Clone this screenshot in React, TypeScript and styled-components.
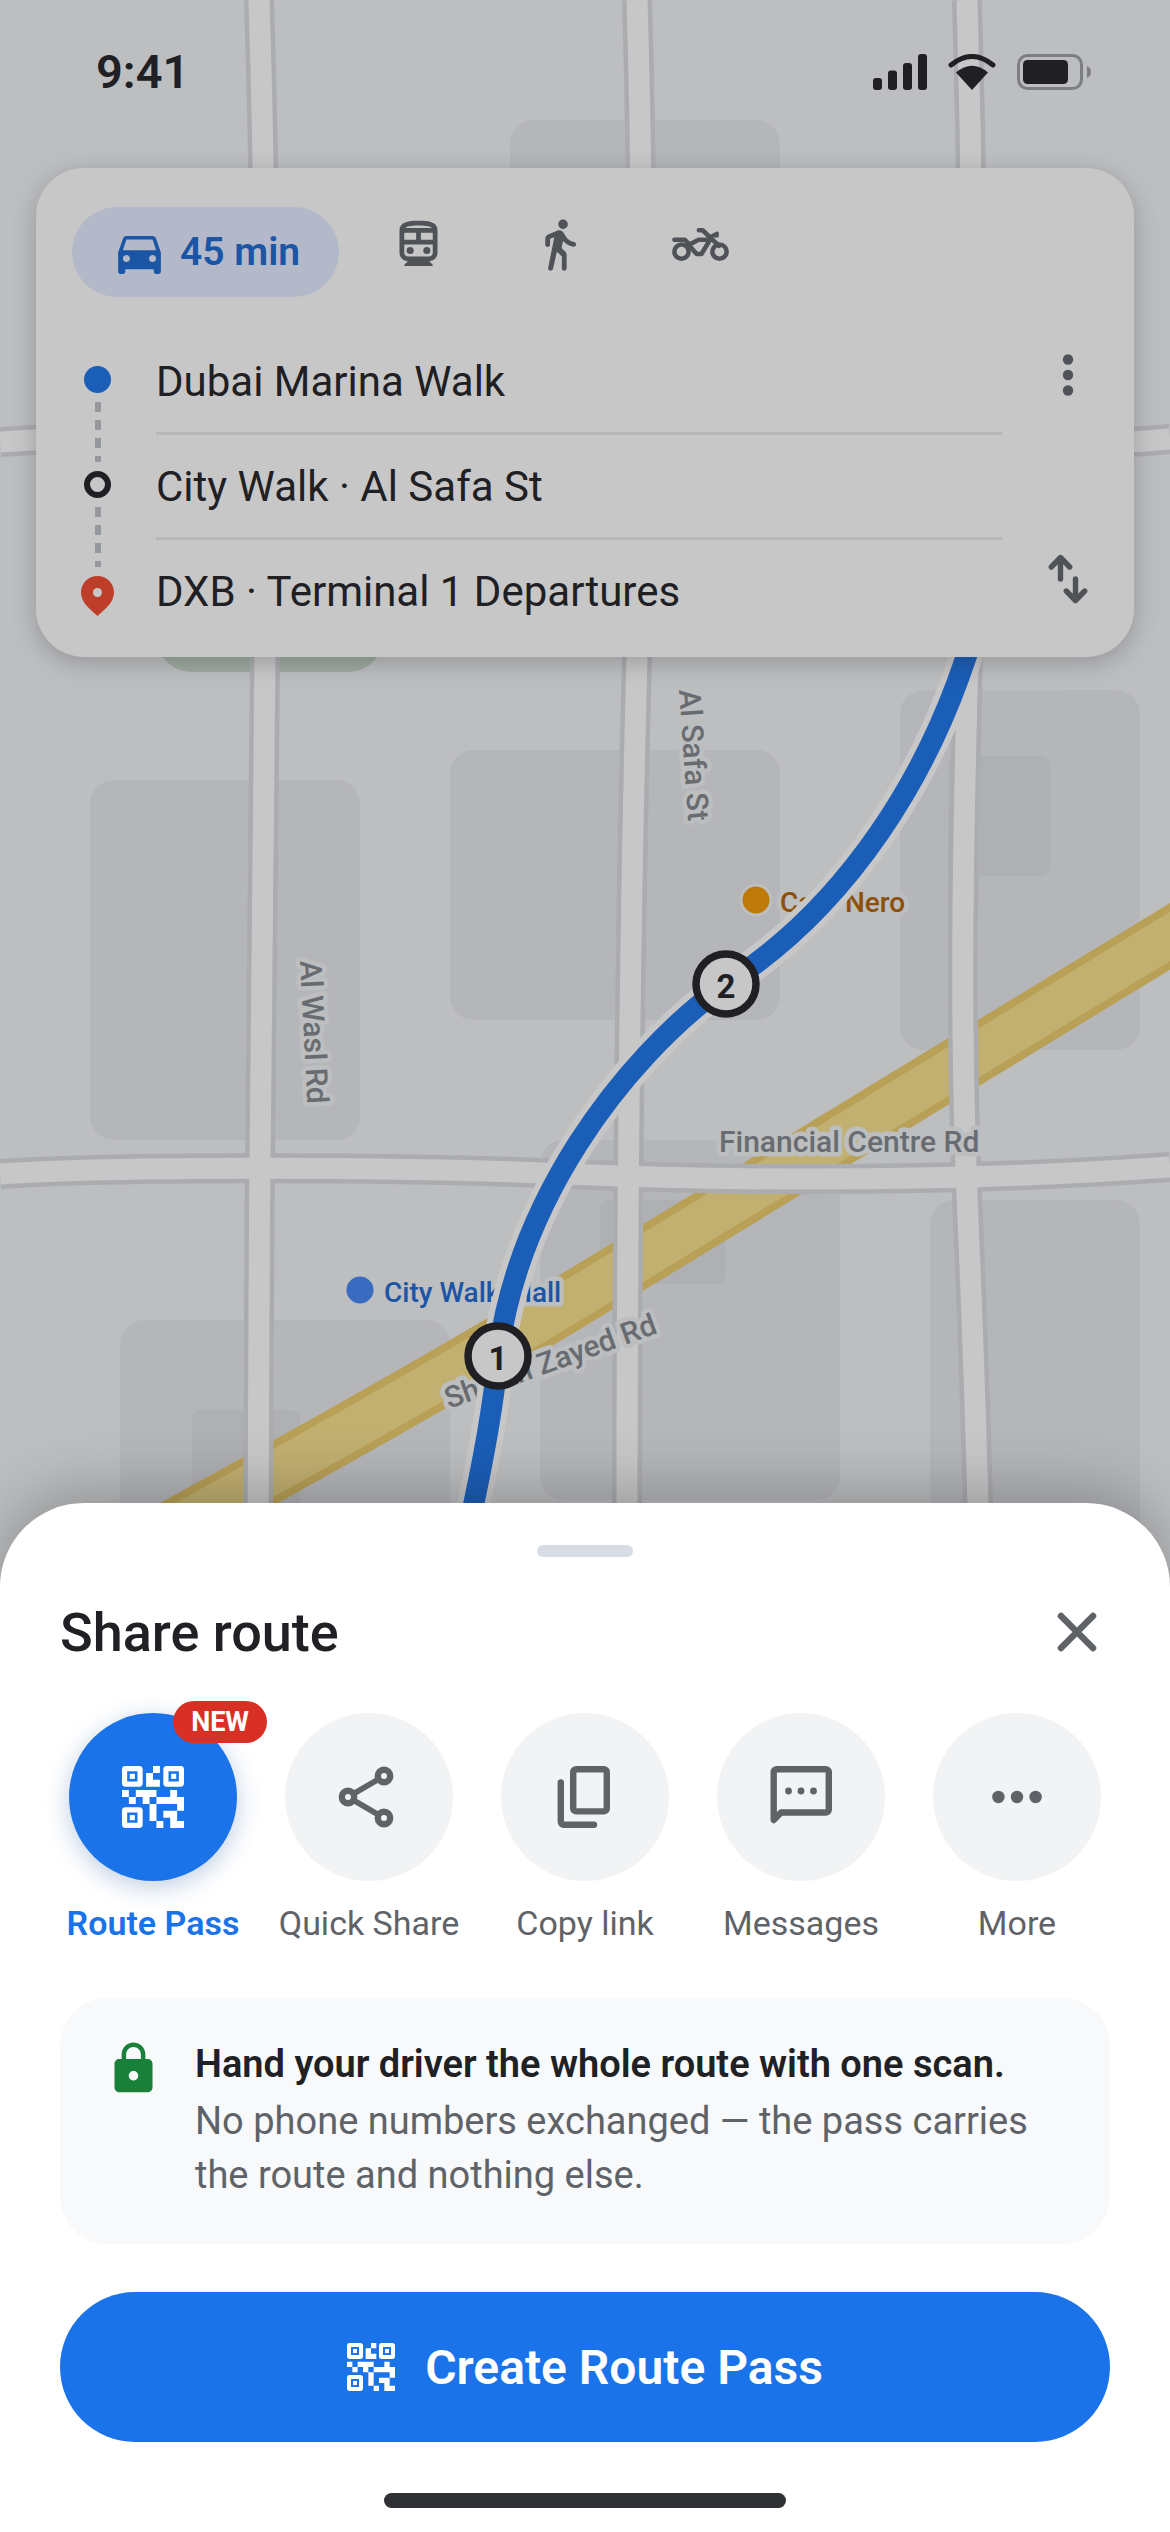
import { ReactNode } from "react";
import styled, { createGlobalStyle } from "styled-components";
import { MdDirectionsCar, MdLock, MdOutlineDirectionsTransit } from "react-icons/md";

const GlobalStyle = createGlobalStyle`
    * {
        box-sizing: border-box;
    }
    body {
        margin: 0;
        font-family: Roboto, "Noto Sans", sans-serif;
        color: #202124;
    }
    button {
        border: 0;
        padding: 0;
        background: none;
        font-family: inherit;
        color: inherit;
        cursor: pointer;
    }
    svg {
        display: block;
        flex-shrink: 0;
    }
`;

const Screen = styled.div`
    position: relative;
    display: flex;
    flex-direction: column;
    justify-content: space-between;
    min-height: 100vh;
    overflow: hidden;
    background: #f1f3f4;
`;

const MapLayer = styled.svg`
    position: absolute;
    inset: 0;
    width: 100%;
    height: 100%;
`;

const Scrim = styled.div`
    position: absolute;
    inset: 0;
    background: rgba(32, 33, 36, 0.25);
`;

const TopArea = styled.header`
    position: relative;
    padding: 0 36px;
`;

const StatusBar = styled.div`
    display: flex;
    align-items: center;
    justify-content: space-between;
    height: 144px;
    margin-bottom: 24px;
    padding: 0 42px 0 60px;
`;

const Clock = styled.span`
    font-size: 47px;
    font-weight: 600;
    line-height: 54px;
`;

const StatusIcons = styled.div`
    display: flex;
    align-items: center;
    gap: 21px;
`;

const RouteCard = styled.section`
    padding: 39px 36px 15px;
    border-radius: 48px;
    background: #fff;
    box-shadow: 0 6px 24px rgba(32, 33, 36, 0.25);
`;

const Modes = styled.div`
    display: flex;
    align-items: flex-start;
    gap: 18px;
    height: 90px;
    margin-bottom: 33px;
`;

const ModeButton = styled.button<{ $active?: boolean }>`
    display: flex;
    align-items: center;
    gap: 12px;
    height: ${(props) => (props.$active ? "90px" : "74px")};
    padding: 0 ${(props) => (props.$active ? "39px" : "33px")};
    border-radius: 45px;
    background: ${(props) => (props.$active ? "#e4edff" : "none")};
    color: ${(props) => (props.$active ? "#1967d2" : "#5f6368")};
    font-size: 39px;
    font-weight: 600;
`;

const RouteBody = styled.div`
    display: flex;
    padding-left: 12px;
`;

const Rail = styled.div`
    display: flex;
    flex-direction: column;
    align-items: center;
    gap: 9px;
    width: 27px;
    padding-top: 36px;
`;

const StopDot = styled.span<{ $via?: boolean }>`
    flex-shrink: 0;
    width: 27px;
    height: 27px;
    border-radius: 50%;
    background: ${(props) => (props.$via ? "#fff" : "#1a73e8")};
    border: ${(props) => (props.$via ? "6px solid #202124" : "0")};
`;

const Dashes = styled.span`
    width: 6px;
    height: 60px;
    background: repeating-linear-gradient(#bdc1c6 0 10px, transparent 10px 18px);
`;

const Stops = styled.ol`
    flex: 1;
    margin: 0 36px 0 45px;
    padding: 0;
    list-style: none;
`;

const Stop = styled.li`
    height: 105px;
    font-size: 42px;
    line-height: 104px;
    border-bottom: 3px solid #e8eaed;
    &:last-child {
        height: 102px;
        border-bottom: 0;
    }
`;

const CardActions = styled.div`
    display: flex;
    flex-direction: column;
    justify-content: space-between;
    padding: 15px 0 33px;
    color: #5f6368;
`;

const Sheet = styled.main`
    position: relative;
    display: flex;
    flex-direction: column;
    padding: 42px 60px 24px;
    border-radius: 84px 84px 0 0;
    background: #fff;
    box-shadow: 0 -12px 60px rgba(0, 0, 0, 0.24);
`;

const Handle = styled.div`
    align-self: center;
    width: 96px;
    height: 12px;
    border-radius: 6px;
    background: #d8dde5;
`;

const SheetHeader = styled.div`
    display: flex;
    align-items: center;
    justify-content: space-between;
    height: 72px;
    margin: 39px 0 45px;
`;

const SheetTitle = styled.h1`
    margin: 0;
    font-size: 54px;
    font-weight: 500;
`;

const CloseButton = styled.button`
    color: #5f6368;
`;

const Targets = styled.div`
    display: grid;
    grid-template-columns: repeat(5, 1fr);
    gap: 30px;
    margin-bottom: 54px;
`;

const Target = styled.button<{ $active?: boolean }>`
    display: flex;
    flex-direction: column;
    align-items: center;
    gap: 21px;
    color: ${(props) => (props.$active ? "#1a73e8" : "#5f6368")};
    font-size: 34px;
    font-weight: ${(props) => (props.$active ? 600 : 400)};
    line-height: 42px;
    white-space: nowrap;
`;

const TargetCircle = styled.span<{ $active?: boolean }>`
    position: relative;
    display: flex;
    align-items: center;
    justify-content: center;
    width: 168px;
    height: 168px;
    border-radius: 50%;
    color: ${(props) => (props.$active ? "#fff" : "#5f6368")};
    background: ${(props) => (props.$active ? "#1a73e8" : "#f1f3f4")};
    box-shadow: ${(props) => (props.$active ? "0 6px 24px rgba(26, 80, 160, 0.28)" : "none")};
`;

const Badge = styled.span`
    position: absolute;
    top: -12px;
    right: -30px;
    padding: 0 18px;
    border-radius: 21px;
    background: #d93025;
    color: #fff;
    font-size: 27px;
    font-weight: 700;
    line-height: 42px;
`;

const InfoBox = styled.section`
    display: flex;
    align-items: flex-start;
    gap: 33px;
    margin-bottom: 48px;
    padding: 42px 45px;
    border-radius: 48px;
    background: #f8f9fa;
    font-size: 38px;
    line-height: 54px;
`;

const InfoTitle = styled.h2`
    margin: 0 0 6px;
    font-size: 38px;
    font-weight: 600;
    line-height: 48px;
`;

const InfoText = styled.p`
    margin: 0;
    color: #5f6368;
`;

const PrimaryButton = styled.button`
    display: flex;
    align-items: center;
    justify-content: center;
    gap: 30px;
    height: 150px;
    margin-bottom: 51px;
    border-radius: 75px;
    background: #1a73e8;
    color: #fff;
    font-size: 48px;
    font-weight: 600;
`;

const HomeIndicator = styled.div`
    align-self: center;
    width: 402px;
    height: 15px;
    border-radius: 8px;
    background: #303134;
`;

const RoadLabel = styled.text`
    font-size: 30px;
    font-weight: 500;
    fill: #80868b;
    stroke: #f1f3f4;
    stroke-width: 9px;
    stroke-linejoin: round;
    paint-order: stroke;
`;

const PlaceLabel = styled(RoadLabel)<{ $color: string }>`
    font-size: 28px;
    fill: ${(props) => props.$color};
`;

const PinNumber = styled.text`
    font-size: 33px;
    font-weight: 700;
    fill: #202124;
    text-anchor: middle;
`;

const blocks = [
    { x: 510, y: 120, w: 270, h: 300 },
    { x: 90, y: 780, w: 270, h: 360 },
    { x: 450, y: 750, w: 330, h: 270 },
    { x: 900, y: 690, w: 240, h: 360 },
    { x: 120, y: 1320, w: 330, h: 300 },
    { x: 540, y: 1140, w: 300, h: 360 },
    { x: 930, y: 1200, w: 210, h: 360 },
];

const buildings = [
    { x: 948, y: 756, w: 102, h: 120 },
    { x: 192, y: 1410, w: 108, h: 120 },
    { x: 600, y: 1200, w: 126, h: 84 },
];

const roads = [
    "M0 442C300 420 800 470 1170 439",
    "M0 1174C120 1166 400 1167 540 1173S920 1185 1170 1167",
    "M259 0C266 220 267 440 265 657S258 1250 258 1540",
    "M637 0C643 200 644 400 637 657S627 1200 627 1540",
    "M967 0C973 200 975 400 968 657S961 1060 968 1220S976 1440 979 1540",
];

const highway = "M60 1590C250 1487 430 1387 570 1302L1200 918";
const route = "M468 1530C486 1450 494 1400 498 1356C517 1206 616 1064 726 984C836 914 940 780 985 590";

const pins = [
    { label: "1", x: 498, y: 1356 },
    { label: "2", x: 726, y: 984 },
];

function RouteMap() {
    return (
        <MapLayer viewBox="0 0 1170 2532" preserveAspectRatio="xMidYMin slice" aria-hidden="true">
            {blocks.map((b) => (
                <rect key={`${b.x}-${b.y}`} x={b.x} y={b.y} width={b.w} height={b.h} rx="24" fill="#e6e8ec" />
            ))}
            {buildings.map((b) => (
                <rect key={`${b.x}-${b.y}`} x={b.x} y={b.y} width={b.w} height={b.h} rx="9" fill="#dfe1e5" />
            ))}
            <rect x="156" y="450" width="228" height="222" rx="36" fill="#c9d9cb" />
            <g fill="none">
                <path d={highway} stroke="#edcb68" strokeWidth="57" />
                <path d={highway} stroke="#f9e18b" strokeWidth="42" />
                {roads.map((d) => (
                    <path key={d} d={d} stroke="#d9dbdf" strokeWidth="30" />
                ))}
                {roads.map((d) => (
                    <path key={d} d={d} stroke="#fff" strokeWidth="21" />
                ))}
            </g>
            <RoadLabel transform="translate(300 961) rotate(87)">Al Wasl Rd</RoadLabel>
            <RoadLabel transform="translate(679 690) rotate(86)">Al Safa St</RoadLabel>
            <RoadLabel transform="translate(449 1409) rotate(-20)">Sheikh Zayed Rd</RoadLabel>
            <RoadLabel x="719" y="1152">Financial Centre Rd</RoadLabel>
            <circle cx="360" cy="1290" r="15" fill="#4285f4" stroke="#f1f3f4" strokeWidth="3" />
            <PlaceLabel $color="#1967d2" x="384" y="1302">City Walk Mall</PlaceLabel>
            <circle cx="756" cy="900" r="15" fill="#f29900" stroke="#f1f3f4" strokeWidth="3" />
            <PlaceLabel $color="#b06000" x="780" y="912">Café Nero</PlaceLabel>
            <g fill="none">
                <path d={route} stroke="#fff" strokeWidth="33" />
                <path d={route} stroke="#1a73e8" strokeWidth="21" />
            </g>
            {pins.map((pin) => (
                <g key={pin.label}>
                    <circle cx={pin.x} cy={pin.y} r="30" fill="#fff" stroke="#202124" strokeWidth="7.5" />
                    <PinNumber x={pin.x} y={pin.y + 14}>{pin.label}</PinNumber>
                </g>
            ))}
        </MapLayer>
    );
}

function QrIcon({ size }: { size: number }) {
    const finders = [[0, 0], [6, 0], [0, 6]];
    return (
        <svg width={size} height={size} viewBox="0 0 9 9" fill="currentColor">
            {finders.map(([x, y]) => (
                <g key={`${x}-${y}`} transform={`translate(${x} ${y})`}>
                    <path
                        fillRule="evenodd"
                        d="M.5 0h2a.5.5 0 0 1 .5.5v2a.5.5 0 0 1-.5.5h-2a.5.5 0 0 1-.5-.5v-2A.5.5 0 0 1 .5 0zM.75.75v1.5h1.5V.75z"
                    />
                    <path d="M1.13 1.13h.74v.74h-.74z" />
                </g>
            ))}
            <path d="M4.5 0h1v1h-1v1h1v1h-2V1h1zM0 3.5h1v1h1v1H1v-1H0zM2 3.5h3v1h2v1H5V8H4V5.5h1v-1H4v1H3v-1H2zM7 3.5h1v1h1v2H8v-1h-1v-1zM6 6.5h2V8h1v1H7V7.5H6zM5 8h1v1H5z" />
        </svg>
    );
}

function StrokeIcon({ children }: { children: ReactNode }) {
    return (
        <svg
            width="72"
            height="72"
            viewBox="0 0 72 72"
            fill="none"
            stroke="currentColor"
            strokeWidth="6.4"
            strokeLinecap="round"
            strokeLinejoin="round"
        >
            {children}
        </svg>
    );
}

function WalkIcon() {
    return (
        <svg width="57" height="57" viewBox="0 0 24 24" fill="currentColor">
            <path d="M13.5 5.5c1.1 0 2-.9 2-2s-.9-2-2-2-2 .9-2 2 .9 2 2 2zM9.8 8.9L7.24 21.81c-.13.61.35 1.19.98 1.19h.08c.47 0 .87-.32.98-.78L10.9 15l2.1 2v5c0 .55.45 1 1 1s1-.45 1-1v-5.64c0-.55-.22-1.07-.62-1.45L12.9 13.5l.6-3c1.07 1.24 2.62 2.13 4.36 2.41.6.09 1.14-.39 1.14-1 0-.49-.36-.9-.84-.98-1.53-.25-2.8-1.15-3.46-2.33l-1-1.6c-.4-.6-1-1-1.7-1-.3 0-.5.1-.8.1L7.21 7.76C6.47 8.08 6 8.8 6 9.61V12c0 .55.45 1 1 1s1-.45 1-1V9.6l1.8-.7" />
        </svg>
    );
}

function MotorcycleIcon() {
    return (
        <svg
            width="57"
            height="57"
            viewBox="0 0 24 24"
            fill="none"
            stroke="currentColor"
            strokeWidth="1.9"
            strokeLinecap="round"
            strokeLinejoin="round"
        >
            <circle cx="4" cy="15" r="3" />
            <circle cx="20" cy="15" r="3" />
            <path d="M1 10H5.4L7.4 12L11.2 10H15.6" />
            <path d="M7 12.2L10.4 16H12.4L15.9 10.2" />
            <path d="M11.3 6H12.9L19.8 12.6" />
            <path d="M16.4 8.4L19.1 7.1V8.5H16.8z" strokeWidth="1.2" fill="currentColor" />
        </svg>
    );
}

const targets = [
    { name: "Route Pass", active: true, badge: "NEW", icon: <QrIcon size={62} /> },
    {
        name: "Quick Share",
        icon: (
            <StrokeIcon>
                <circle cx="51" cy="15" r="6.2" />
                <circle cx="15" cy="36" r="6.2" />
                <circle cx="51" cy="57" r="6.2" />
                <path d="M21 32.5L45 18.5M21 39.5L45 53.5" strokeLinecap="butt" strokeWidth="5.6" />
            </StrokeIcon>
        ),
    },
    {
        name: "Copy link",
        icon: (
            <StrokeIcon>
                <rect x="24.2" y="8.2" width="33.6" height="42.2" rx="3" />
                <path d="M11.8 21.5V60.8a3 3 0 0 0 3 3H45" />
            </StrokeIcon>
        ),
    },
    {
        name: "Messages",
        icon: (
            <StrokeIcon>
                <path d="M8.7 59V11.2a3 3 0 0 1 3-3H60.8a3 3 0 0 1 3 3V48.5a3 3 0 0 1-3 3H16z" />
                <g fill="currentColor" stroke="none">
                    <circle cx="23.5" cy="30" r="3.4" />
                    <circle cx="36" cy="30" r="3.4" />
                    <circle cx="48.5" cy="30" r="3.4" />
                </g>
            </StrokeIcon>
        ),
    },
    {
        name: "More",
        icon: (
            <StrokeIcon>
                <g fill="currentColor" stroke="none">
                    <circle cx="17.4" cy="36" r="6.2" />
                    <circle cx="36" cy="36" r="6.2" />
                    <circle cx="54.6" cy="36" r="6.2" />
                </g>
            </StrokeIcon>
        ),
    },
];

function App() {
    return (
        <Screen>
            <GlobalStyle />
            <RouteMap />
            <TopArea>
                <StatusBar>
                    <Clock>9:41</Clock>
                    <StatusIcons>
                        <svg width="54" height="36" viewBox="0 0 54 36" fill="#202124">
                            <rect x="0" y="24" width="9" height="12" rx="3" />
                            <rect x="15" y="16.5" width="9" height="19.5" rx="3" />
                            <rect x="30" y="9" width="9" height="27" rx="3" />
                            <rect x="45" y="0" width="9" height="36" rx="3" />
                        </svg>
                        <svg width="48" height="36" viewBox="0 0 48 36" fill="#202124">
                            <path d="M3 11Q24-6 45 11" fill="none" stroke="#202124" strokeWidth="5" strokeLinecap="round" />
                            <path d="M8 18.5Q24 4.9 40 18.5L24 36z" />
                        </svg>
                        <svg width="75" height="36" viewBox="0 0 75 36" fill="#202124">
                            <rect x="1.5" y="1.5" width="63" height="33" rx="9" fill="none" stroke="#202124" strokeWidth="3" opacity=".4" />
                            <rect x="6" y="6" width="45" height="24" rx="4.5" />
                            <path d="M70 12a6.5 6.5 0 0 1 0 12z" opacity=".4" />
                        </svg>
                    </StatusIcons>
                </StatusBar>
                <RouteCard>
                    <Modes>
                        <ModeButton $active>
                            <MdDirectionsCar size={57} />
                            45 min
                        </ModeButton>
                        <ModeButton aria-label="Transit">
                            <MdOutlineDirectionsTransit size={57} />
                        </ModeButton>
                        <ModeButton aria-label="Walk">
                            <WalkIcon />
                        </ModeButton>
                        <ModeButton aria-label="Motorcycle">
                            <MotorcycleIcon />
                        </ModeButton>
                    </Modes>
                    <RouteBody>
                        <Rail>
                            <StopDot />
                            <Dashes />
                            <StopDot $via />
                            <Dashes />
                            <svg width="33" height="40" viewBox="0 0 33 40">
                                <path d="M16.5 0C7.3 0 0 7.2 0 16.3C0 26 7.5 32 16.5 40C25.5 32 33 26 33 16.3C33 7.2 25.7 0 16.5 0z" fill="#f5482c" />
                                <circle cx="16.5" cy="16.5" r="4.5" fill="#fff" />
                            </svg>
                        </Rail>
                        <Stops>
                            <Stop>Dubai Marina Walk</Stop>
                            <Stop>City Walk · Al Safa St</Stop>
                            <Stop>DXB · Terminal 1 Departures</Stop>
                        </Stops>
                        <CardActions>
                            <button aria-label="Route options">
                                <svg width="60" height="60" viewBox="0 0 60 60" fill="currentColor">
                                    <circle cx="30" cy="14.5" r="5.2" />
                                    <circle cx="30" cy="30" r="5.2" />
                                    <circle cx="30" cy="45.5" r="5.2" />
                                </svg>
                            </button>
                            <button aria-label="Swap start and destination">
                                <svg
                                    width="60"
                                    height="60"
                                    viewBox="0 0 60 60"
                                    fill="none"
                                    stroke="currentColor"
                                    strokeWidth="5.4"
                                    strokeLinecap="round"
                                    strokeLinejoin="round"
                                >
                                    <path d="M22.5 30V9M13.3 18L22.5 8.5L31.7 18M37.5 30V51M28.3 42L37.5 51.5L46.7 42" />
                                </svg>
                            </button>
                        </CardActions>
                    </RouteBody>
                </RouteCard>
            </TopArea>
            <Scrim />
            <Sheet>
                <Handle />
                <SheetHeader>
                    <SheetTitle>Share route</SheetTitle>
                    <CloseButton aria-label="Close">
                        <svg width="66" height="66" viewBox="0 0 66 66" fill="none" stroke="currentColor" strokeWidth="6.6" strokeLinecap="round">
                            <path d="M17 17L49 49M49 17L17 49" />
                        </svg>
                    </CloseButton>
                </SheetHeader>
                <Targets>
                    {targets.map((target) => (
                        <Target key={target.name} $active={target.active}>
                            <TargetCircle $active={target.active}>
                                {target.icon}
                                {target.badge && <Badge>{target.badge}</Badge>}
                            </TargetCircle>
                            {target.name}
                        </Target>
                    ))}
                </Targets>
                <InfoBox>
                    <MdLock size={57} color="#188038" />
                    <div>
                        <InfoTitle>Hand your driver the whole route with one scan.</InfoTitle>
                        <InfoText>No phone numbers exchanged — the pass carries the route and nothing else.</InfoText>
                    </div>
                </InfoBox>
                <PrimaryButton>
                    <QrIcon size={48} />
                    Create Route Pass
                </PrimaryButton>
                <HomeIndicator />
            </Sheet>
        </Screen>
    );
}

export default App;
